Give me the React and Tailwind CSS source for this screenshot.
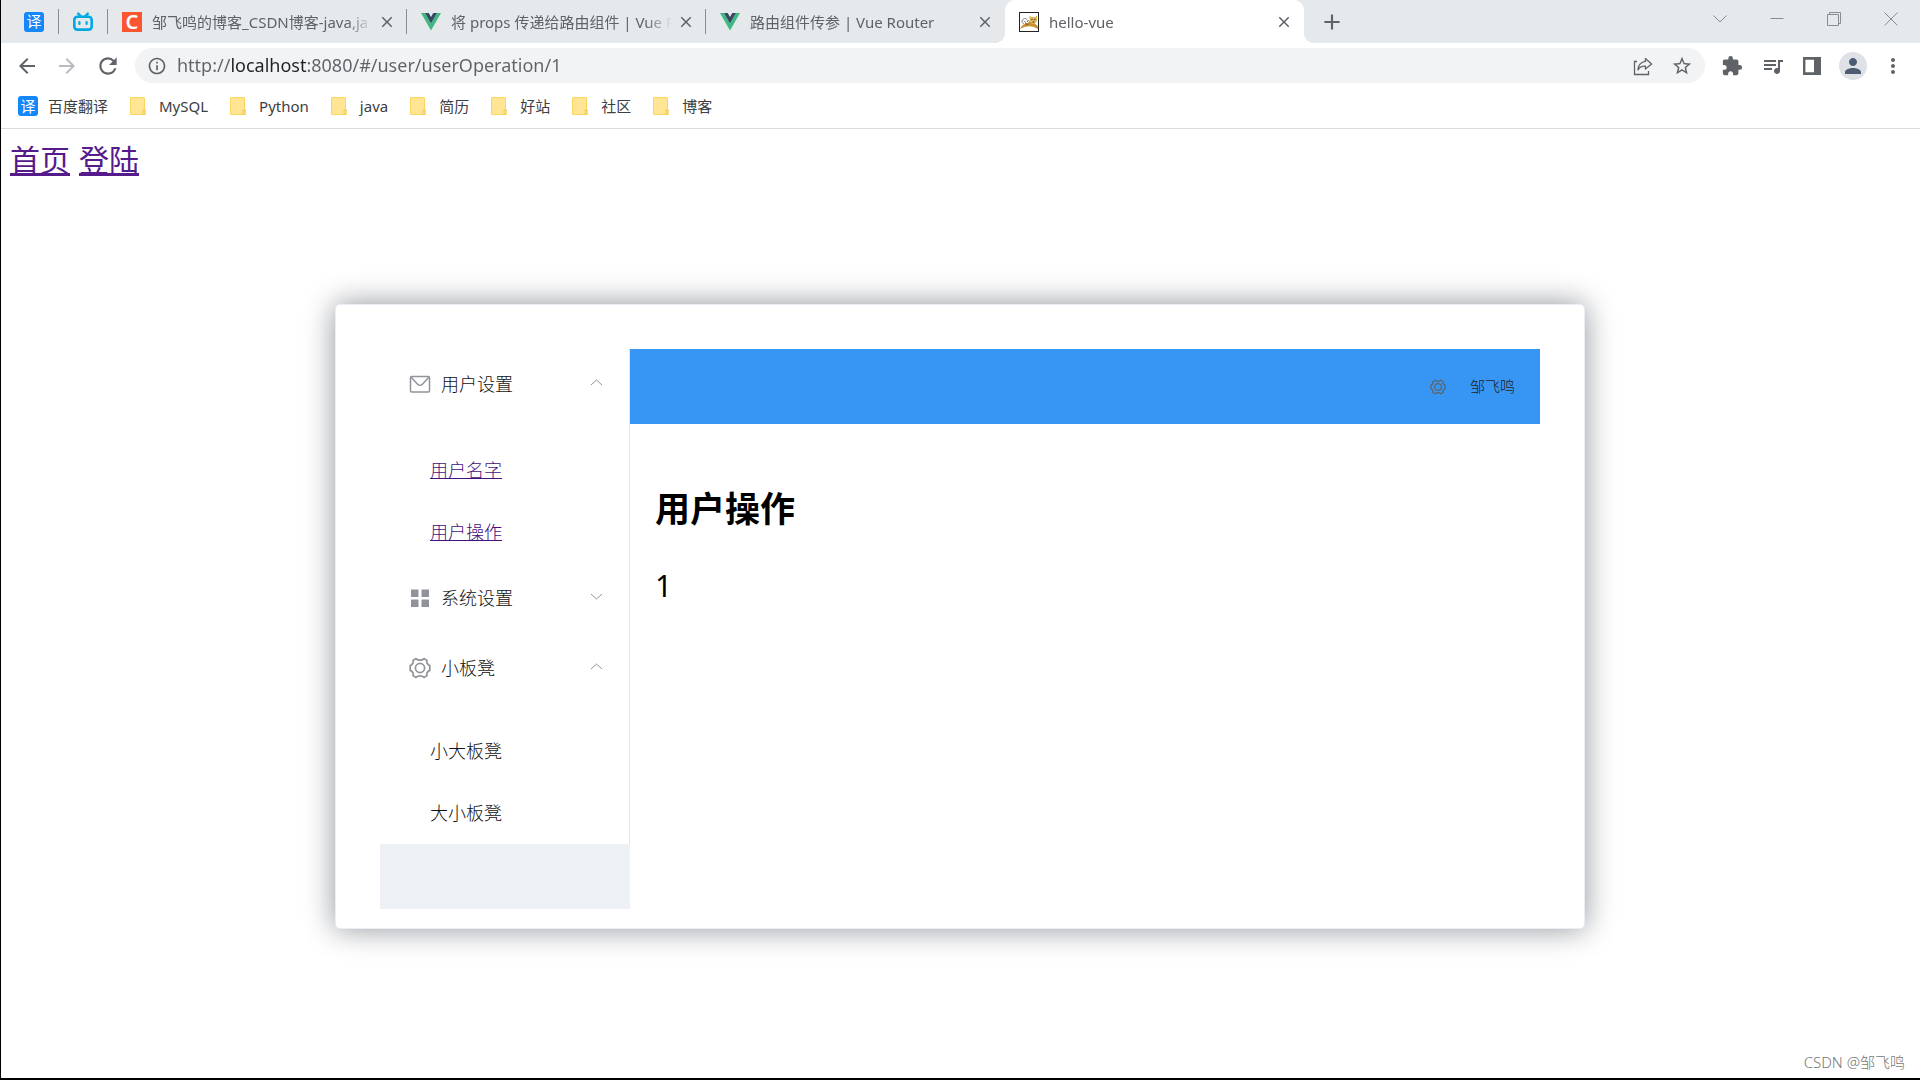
import { useState } from "react";
import {
  MdAdd,
  MdArrowBack,
  MdArrowForward,
  MdClose,
  MdExtension,
  MdInfoOutline,
  MdMoreVert,
  MdPerson,
  MdQueueMusic,
  MdRefresh,
  MdStarBorder,
} from "react-icons/md";

const BOOKMARKS = ["MySQL", "Python", "java", "简历", "好站", "社区", "博客"];

const MENU = [
  {
    title: "用户设置",
    icon: MailIcon,
    open: true,
    listClass: "pt-5",
    items: [
      { label: "用户名字", href: "#/user/userName" },
      { label: "用户操作", href: "#/user/userOperation/1" },
    ],
  },
  { title: "系统设置", icon: GridIcon, open: false, listClass: "pt-[17px]", items: [] },
  {
    title: "小板凳",
    icon: GearIcon,
    open: true,
    listClass: "pt-[17px]",
    items: [{ label: "小大板凳" }, { label: "大小板凳" }],
  },
];

function TranslateIcon() {
  return (
    <span className="flex size-5 shrink-0 items-center justify-center rounded-[3px] bg-[#1487fa] text-[15px] leading-none text-white">
      译
    </span>
  );
}

function BiliIcon() {
  return (
    <svg viewBox="0 0 20 20" className="size-5 shrink-0" fill="none" stroke="#00a8e4" strokeLinecap="round">
      <path d="M5.2 1.6 L7.6 4 M14.8 1.6 L12.4 4" strokeWidth="2.4" />
      <rect x="1.3" y="4.8" width="17.4" height="12.8" rx="3" strokeWidth="2.6" />
      <path d="M6.4 10 V12 M13.6 10 V12" strokeWidth="2.2" />
    </svg>
  );
}

function CsdnIcon() {
  return (
    <span className="flex size-5 shrink-0 items-center justify-center bg-[#fc5531] text-[20px] leading-none font-semibold text-white">
      C
    </span>
  );
}

function VueIcon() {
  return (
    <svg viewBox="0 0 20 20" className="size-5 shrink-0">
      <path d="M0 1 H4 L10 11.4 L16 1 H20 L10 18.4 Z" fill="#41b883" />
      <path d="M4 1 H7.7 L10 5 L12.3 1 H16 L10 11.4 Z" fill="#34495e" />
    </svg>
  );
}

function CatIcon() {
  return (
    <svg viewBox="0 0 20 20" className="size-5 shrink-0">
      <rect x="0.5" y="0.5" width="19" height="19" fill="#fff" stroke="#222" />
      <path d="M1 17 C2.5 13.5 5 11.5 8.5 11 L11 9 L15 11 L19 14.5 V17 L14.5 14.8 C11 14 7 13.5 1 17 Z" fill="#c98f2c" />
      <path d="M10.5 3.5 L12.5 5 H16 L18 3.5 V9 L15.8 11.8 H13 L10.5 9 Z" fill="#dcb75c" />
      <path d="M5 12 C2 11 2.5 7 5.5 6.5 C6.5 6.4 7.5 6.8 8 7.6 M4.6 9 L7 10.5" stroke="#888" fill="none" />
      <path d="M8 9.5 L9.5 8.5 M12.4 7.4 H13.6 M15.2 7.4 H16.4 M13.6 10 H15.4 M6.5 11.5 L8.5 12.5" stroke="#3a2e1c" fill="none" />
    </svg>
  );
}

function FolderIcon() {
  return (
    <svg viewBox="0 0 16 18" className="h-[18px] w-4 shrink-0">
      <rect x="0" y="0" width="15" height="18" rx="1.5" fill="#fbd65c" />
      <rect x="1" y="1" width="13" height="16" rx="1" fill="#ffe594" />
      <path d="M12.5 18 V13.5 a1.7 1.7 0 0 1 3.3 0 V16.5 a1.5 1.5 0 0 1 -1.5 1.5 Z" fill="#f4cd50" />
      <path d="M14 16.5 V14" stroke="#ffeaa5" />
    </svg>
  );
}

function ShareIcon() {
  return (
    <svg viewBox="0 0 20 20" className="size-5" fill="none" stroke="#5f6368" strokeWidth="1.3">
      <path d="M4 5.5 H1.5 V18.5 H15.5 V15" />
      <path d="M12.4 2.6 L18.6 8 L12.4 13 V10.2 C9 10 6.6 11 5 14 C5 9.4 8 5.8 12.4 5.4 Z" strokeLinejoin="round" />
    </svg>
  );
}

function SidePanelIcon() {
  return (
    <svg viewBox="0 0 18 18" className="size-[18px]">
      <path d="M0 0 H18 V18 H0 Z M2.4 2.8 V15.2 H11 V2.8 Z" fill="#5f6368" fillRule="evenodd" />
    </svg>
  );
}

function MailIcon({ className }) {
  return (
    <svg viewBox="0 0 22 22" className={className} fill="none" stroke="currentColor" strokeWidth="1.5">
      <rect x="1.5" y="3.5" width="19" height="15.5" rx="1.2" />
      <path d="M2 4 L8.6 11.2 C10 12.7 12 12.7 13.4 11.2 L20 4" />
    </svg>
  );
}

function GridIcon({ className }) {
  return (
    <svg viewBox="0 0 22 22" className={className} fill="currentColor">
      <path d="M2 2.5 H9.5 V10 H2 Z M12.5 2.5 H20 V10 H12.5 Z M2 12.5 H9.5 V20 H2 Z M12.5 12.5 H20 V20 H12.5 Z" />
    </svg>
  );
}

function GearIcon({ className }) {
  return (
    <svg viewBox="0 0 22 22" className={className} fill="none" stroke="currentColor" strokeWidth="1.7" strokeLinejoin="round">
      <path d="M7 1.6 C8.2 3 9.6 3.2 11 3.2 C12.4 3.2 13.8 3 15 1.6 L18 3.4 C17.4 6 18.4 7.6 20.8 8.6 V13.4 C18.4 14.4 17.4 16 18 18.6 L15 20.4 C13.8 19 12.4 18.8 11 18.8 C9.6 18.8 8.2 19 7 20.4 L4 18.6 C4.6 16 3.6 14.4 1.2 13.4 V8.6 C3.6 7.6 4.6 6 4 3.4 Z" />
      <circle cx="11" cy="11" r="4.6" />
    </svg>
  );
}

function Chevron({ open }) {
  return (
    <svg viewBox="0 0 15 15" className="mb-1 ml-auto size-[15px] text-[#909399]" fill="none" stroke="currentColor">
      <path d={open ? "M2 10 L7.5 5 L13 10" : "M2 5 L7.5 10 L13 5"} />
    </svg>
  );
}

function Tab({ icon: Icon, title, active, divider = true }) {
  return (
    <div
      className={`relative flex h-full w-[299px] min-w-0 items-center pr-[10px] pl-[14px] ${
        active ? "rounded-t-[10px] bg-white" : ""
      }`}
    >
      {active && (
        <>
          <span className="absolute bottom-0 -left-[10px] size-[10px] bg-[radial-gradient(circle_at_top_left,transparent_10px,white_10px)]" />
          <span className="absolute -right-[10px] bottom-0 size-[10px] bg-[radial-gradient(circle_at_top_right,transparent_10px,white_10px)]" />
        </>
      )}
      <button type="button" className="flex min-w-0 flex-1 items-center gap-[10px] text-left">
        <Icon />
        <span className="min-w-0 flex-1 mask-[linear-gradient(to_right,black_88%,transparent)] text-[15px] leading-5 whitespace-nowrap text-[#5f6368]">
          {title}
        </span>
      </button>
      <button type="button" aria-label="关闭" className="ml-1 flex size-5 items-center justify-center text-[#5f6368]">
        <MdClose size={18} />
      </button>
      {divider && <span className="absolute top-[9px] right-0 h-[25px] w-px bg-[#8a8d91]" />}
    </div>
  );
}

function PinnedTab({ icon: Icon, label }) {
  return (
    <button
      type="button"
      aria-label={label}
      className="flex h-[25px] w-[49px] shrink-0 items-center justify-center border-r border-[#8a8d91]"
    >
      <Icon />
    </button>
  );
}

function TabStrip() {
  return (
    <div className="flex h-[43px] bg-[#e5e9ec] pl-[9px]">
      <div className="flex items-center">
        <PinnedTab icon={TranslateIcon} label="百度翻译" />
        <PinnedTab icon={BiliIcon} label="bilibili" />
      </div>
      <Tab icon={CsdnIcon} title="邹飞鸣的博客_CSDN博客-java,ja" />
      <Tab icon={VueIcon} title="将 props 传递给路由组件 | Vue R" />
      <Tab icon={VueIcon} title="路由组件传参 | Vue Router" divider={false} />
      <Tab icon={CatIcon} title="hello-vue" active divider={false} />
      <button type="button" aria-label="新标签页" className="ml-3 flex size-8 items-center justify-center self-center text-[#5f6368]">
        <MdAdd size={26} />
      </button>
      <div className="ml-auto flex h-[38px] items-center gap-[43px] pr-[22px] text-[#8a8d90]">
        <button type="button" aria-label="搜索标签页">
          <svg viewBox="0 0 14 14" className="size-[14px]" fill="none" stroke="currentColor">
            <path d="M0.5 3.5 L7 10 L13.5 3.5" />
          </svg>
        </button>
        <button type="button" aria-label="最小化">
          <svg viewBox="0 0 14 14" className="size-[14px]" fill="none" stroke="currentColor">
            <path d="M0.5 6.5 H13.5" />
          </svg>
        </button>
        <button type="button" aria-label="还原">
          <svg viewBox="0 0 14 14" className="size-[14px]" fill="none" stroke="currentColor">
            <path d="M0.5 2.5 H11.5 V13.5 H0.5 Z M2.5 2.5 V0.5 H13.5 V11.5 H11.5" />
          </svg>
        </button>
        <button type="button" aria-label="关闭窗口">
          <svg viewBox="0 0 14 14" className="size-[14px]" fill="none" stroke="currentColor">
            <path d="M0.5 0.5 L13.5 13.5 M13.5 0.5 L0.5 13.5" />
          </svg>
        </button>
      </div>
    </div>
  );
}

function Toolbar() {
  const [url, setUrl] = useState("http://localhost:8080/#/user/userOperation/1");

  return (
    <div className="flex h-[45px] items-center pr-[15px] pl-[14px] text-[#5f6368]">
      <div className="flex items-center gap-4">
        <button type="button" aria-label="后退">
          <MdArrowBack size={24} />
        </button>
        <button type="button" aria-label="前进" className="text-[#b9bbbe]">
          <MdArrowForward size={24} />
        </button>
        <button type="button" aria-label="刷新">
          <MdRefresh size={26} />
        </button>
      </div>
      <div className="ml-[14px] flex h-[35px] flex-1 items-center rounded-full bg-[#f1f3f4] px-3">
        <MdInfoOutline size={20} />
        <input
          type="text"
          aria-label="地址"
          value={url}
          onChange={(event) => setUrl(event.target.value)}
          spellCheck={false}
          className="ml-[10px] min-w-0 flex-1 bg-[linear-gradient(to_right,#5f6368_54px,#202124_54px,#202124_130px,#5f6368_130px)] bg-clip-text text-[18px] text-transparent outline-none"
        />
        <button type="button" aria-label="分享此页" className="mr-[18px]">
          <ShareIcon />
        </button>
        <button type="button" aria-label="收藏">
          <MdStarBorder size={22} />
        </button>
      </div>
      <div className="ml-4 flex items-center gap-[18px]">
        <button type="button" aria-label="扩展程序">
          <MdExtension size={22} />
        </button>
        <button type="button" aria-label="媒体">
          <MdQueueMusic size={24} />
        </button>
        <button type="button" aria-label="侧边栏">
          <SidePanelIcon />
        </button>
        <button type="button" aria-label="用户" className="flex size-7 items-center justify-center rounded-full bg-[#dee1e6] text-[#4d5b73]">
          <MdPerson size={24} />
        </button>
      </div>
      <button type="button" aria-label="更多" className="ml-[14px]">
        <MdMoreVert size={24} />
      </button>
    </div>
  );
}

function BookmarkBar() {
  return (
    <nav className="flex h-[41px] items-center gap-[22px] border-b border-[#dadce0] pb-1 pl-[17px] text-[15px] text-[#3c4043]">
      <a href="#fanyi" className="flex items-center gap-[10px]">
        <TranslateIcon />
        百度翻译
      </a>
      {BOOKMARKS.map((name) => (
        <a key={name} href={`#${name}`} className="flex items-center gap-[13px]">
          <FolderIcon />
          {name}
        </a>
      ))}
    </nav>
  );
}

function SubMenu({ title, icon: Icon, open: initialOpen, listClass, items }) {
  const [open, setOpen] = useState(initialOpen);

  return (
    <li>
      <button
        type="button"
        onClick={() => setOpen(!open)}
        className="flex h-[70px] w-full items-center px-[25px] text-left"
      >
        <span className="mr-[6px] flex w-[30px] justify-center text-[#909399]">
          <Icon className="size-[22px]" />
        </span>
        {title}
        <Chevron open={open} />
      </button>
      {open && items.length > 0 && (
        <ul className={listClass}>
          {items.map((item) => (
            <li key={item.label} className="flex h-[62px] items-center pl-[50px]">
              {item.href ? (
                <a href={item.href} className="text-[#45107a] underline">
                  {item.label}
                </a>
              ) : (
                item.label
              )}
            </li>
          ))}
        </ul>
      )}
    </li>
  );
}

function UserCard() {
  return (
    <div className="mx-auto mt-[124px] flex w-[1250px] max-w-full rounded-[5px] border border-[#ebeef5] bg-white px-11 pt-11 pb-[19px] shadow-[0_0_31px_#909399]">
      <aside className="w-[250px] shrink-0 bg-[#edf0f5] pb-[65px]">
        <ul className="border-r border-[#e6e6e6] bg-white text-[18px] font-light text-[#111]">
          {MENU.map((menu) => (
            <SubMenu key={menu.title} {...menu} />
          ))}
        </ul>
      </aside>
      <section className="min-w-0 flex-1">
        <header className="flex h-[75px] items-center justify-end gap-6 bg-[#3796f4] px-[25px] text-[15px] font-light text-[#222]">
          <button type="button" aria-label="设置">
            <GearIcon className="size-4 text-[#606266]" />
          </button>
          <span>邹飞鸣</span>
        </header>
        <main className="p-[25px] text-black">
          <h1 className="mt-9 text-[35px] leading-[48px] font-bold">用户操作</h1>
          <p className="mt-[33px] text-[30px] leading-10">1</p>
        </main>
      </section>
    </div>
  );
}

export default function App() {
  return (
    <div className="flex min-h-screen flex-col border-b-2 border-l border-black bg-white font-['Noto_Sans','Noto_Sans_CJK_SC',sans-serif]">
      <TabStrip />
      <Toolbar />
      <BookmarkBar />
      <div className="flex flex-1 flex-col pt-[11px] pr-[10px] pl-[9px]">
        <nav className="flex gap-[9px] text-[30px] leading-10 text-[#551a8b] underline">
          <a href="#/">首页</a>
          <a href="#/login">登陆</a>
        </nav>
        <UserCard />
        <footer className="mt-auto pr-[5px] pb-[6px] text-right text-[15px] leading-5 font-light text-[#777]">
          CSDN @邹飞鸣
        </footer>
      </div>
    </div>
  );
}
